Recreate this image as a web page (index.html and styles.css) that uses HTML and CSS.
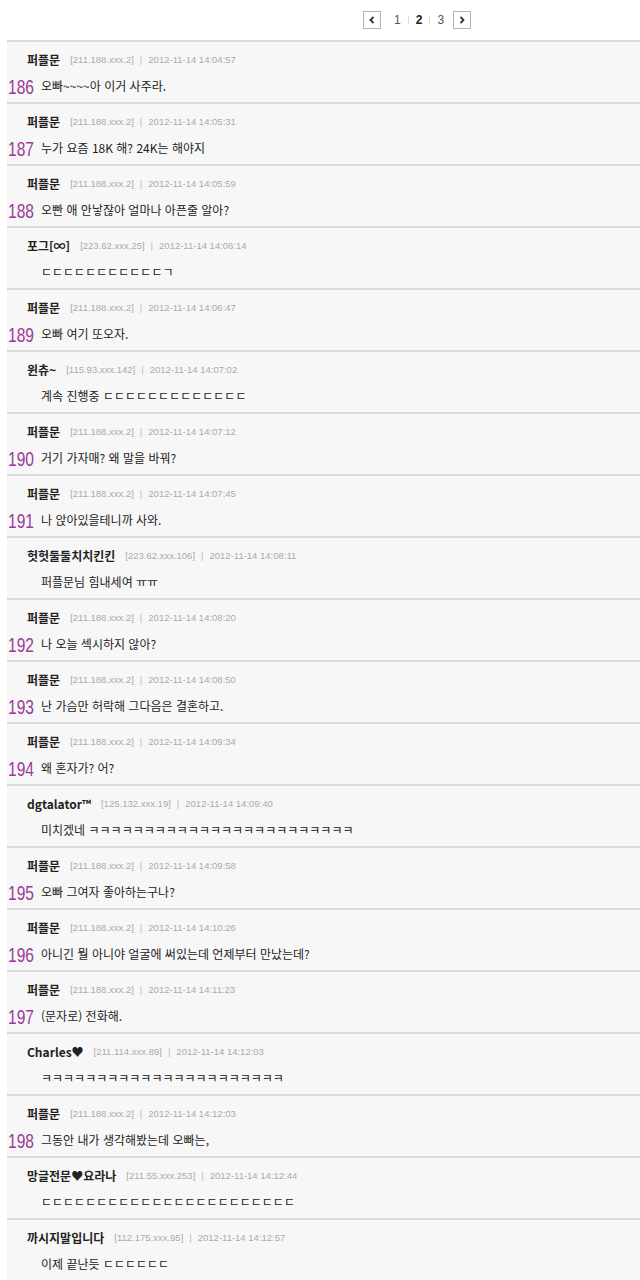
FILE: index.html
```html
<!DOCTYPE html>
<html lang="ko">
<head>
  <meta charset="UTF-8" />
  <meta name="viewport" content="width=device-width, initial-scale=1.0"/>
  <title>댓글</title>
  <link rel="stylesheet" href="styles.css">
</head>
<body>

  <div class="pager">
    <a class="pager-btn" href="#"><svg width="8" height="8" viewBox="0 0 8 8"><path d="M5.5 1 L2.5 4 L5.5 7" fill="none" stroke="#333" stroke-width="1.8"/></svg></a>
    <a class="pager-num first" href="#">1</a>
    <span class="pager-sep"></span>
    <a class="pager-num current" href="#">2</a>
    <span class="pager-sep"></span>
    <a class="pager-num last" href="#">3</a>
    <a class="pager-btn" href="#"><svg width="8" height="8" viewBox="0 0 8 8"><path d="M2.5 1 L5.5 4 L2.5 7" fill="none" stroke="#333" stroke-width="1.8"/></svg></a>
  </div>

  <ul id="comments"></ul>

  <script>
    const comments = [
      { name: "퍼플문", ip: "211.188.xxx.2", time: "14:04:57", no: 186, text: "오빠~~~~아 이거 사주라." },
      { name: "퍼플문", ip: "211.188.xxx.2", time: "14:05:31", no: 187, text: "누가 요즘 18K 해? 24K는 해야지" },
      { name: "퍼플문", ip: "211.188.xxx.2", time: "14:05:59", no: 188, text: "오빤 애 안낳잖아 얼마나 아픈줄 알아?" },
      { name: "포그[∞]", ip: "223.62.xxx.25", time: "14:06:14", text: "ㄷㄷㄷㄷㄷㄷㄷㄷㄷㄷㄷㄱ" },
      { name: "퍼플문", ip: "211.188.xxx.2", time: "14:06:47", no: 189, text: "오빠 여기 또오자." },
      { name: "윈츄~", ip: "115.93.xxx.142", time: "14:07:02", text: "계속 진행중 ㄷㄷㄷㄷㄷㄷㄷㄷㄷㄷㄷㄷㄷ" },
      { name: "퍼플문", ip: "211.188.xxx.2", time: "14:07:12", no: 190, text: "거기 가자매? 왜 말을 바꿔?" },
      { name: "퍼플문", ip: "211.188.xxx.2", time: "14:07:45", no: 191, text: "나 앉아있을테니까 사와." },
      { name: "헛헛둘둘치치킨킨", ip: "223.62.xxx.106", time: "14:08:11", text: "퍼플문님 힘내세여 ㅠㅠ" },
      { name: "퍼플문", ip: "211.188.xxx.2", time: "14:08:20", no: 192, text: "나 오늘 섹시하지 않아?" },
      { name: "퍼플문", ip: "211.188.xxx.2", time: "14:08:50", no: 193, text: "난 가슴만 허락해 그다음은 결혼하고." },
      { name: "퍼플문", ip: "211.188.xxx.2", time: "14:09:34", no: 194, text: "왜 혼자가? 어?" },
      { name: "dgtalator™", ip: "125.132.xxx.19", time: "14:09:40", text: "미치겠네 ㅋㅋㅋㅋㅋㅋㅋㅋㅋㅋㅋㅋㅋㅋㅋㅋㅋㅋㅋㅋㅋㅋㅋㅋ" },
      { name: "퍼플문", ip: "211.188.xxx.2", time: "14:09:58", no: 195, text: "오빠 그여자 좋아하는구나?" },
      { name: "퍼플문", ip: "211.188.xxx.2", time: "14:10:26", no: 196, text: "아니긴 뭘 아니야 얼굴에 써있는데 언제부터 만났는데?" },
      { name: "퍼플문", ip: "211.188.xxx.2", time: "14:11:23", no: 197, text: "(문자로) 전화해." },
      { name: "Charles♥", ip: "211.114.xxx.89", time: "14:12:03", text: "ㅋㅋㅋㅋㅋㅋㅋㅋㅋㅋㅋㅋㅋㅋㅋㅋㅋㅋㅋㅋㅋㅋ" },
      { name: "퍼플문", ip: "211.188.xxx.2", time: "14:12:03", no: 198, text: "그동안 내가 생각해봤는데 오빠는," },
      { name: "망글전문♥요라나", ip: "211.55.xxx.253", time: "14:12:44", text: "ㄷㄷㄷㄷㄷㄷㄷㄷㄷㄷㄷㄷㄷㄷㄷㄷㄷㄷㄷㄷㄷㄷㄷ" },
      { name: "까시지말입니다", ip: "112.175.xxx.95", time: "14:12:57", text: "이제 끝난듯 ㄷㄷㄷㄷㄷㄷ" }
    ];

    const list = document.getElementById("comments");
    comments.forEach(c => {
      const li = document.createElement("li");
      li.className = "comment";
      li.innerHTML = `
        <div class="meta">
          <span class="name">${c.name}</span>
          <span class="ip">[${c.ip}]</span>
          <span class="bar">|</span>
          <span class="date">2012-11-14 ${c.time}</span>
        </div>
        <div class="body">
          <span class="no"><span class="no-digits">${c.no || ""}</span></span>
          <span class="text">${c.text}</span>
        </div>
      `;
      list.appendChild(li);
    });
  </script>

</body>
</html>
```

FILE: styles.css
```css
body {
  margin: 0;
  background-color: #fff;
  font-family: "Noto Sans CJK KR", "Liberation Sans", sans-serif;
  color: #222;
}

.pager {
  height: 40px;
  display: flex;
  align-items: center;
  padding-left: 363px;
  box-sizing: border-box;
}

.pager-btn {
  width: 16px;
  height: 16px;
  border: 1px solid #b5b5b5;
  background-color: #fff;
  display: flex;
  align-items: center;
  justify-content: center;
}

.pager-num {
  font-family: "Liberation Sans", sans-serif;
  font-size: 12px;
  color: #555;
  text-decoration: none;
  padding: 0 7px;
}

.pager-num.first {
  margin-left: 6px;
}

.pager-num.last {
  padding-right: 9px;
}

.pager-num.current {
  font-weight: bold;
  color: #222;
}

.pager-sep {
  width: 1px;
  height: 8px;
  background-color: #ddd;
}

#comments {
  list-style: none;
  margin: 0 0 0 7px;
  padding: 0;
  background-color: #f7f7f7;
  border-top: 2px solid #dadada;
}

.comment {
  height: 51px;
  padding: 9px 0 0;
  border-bottom: 2px solid #dadada;
}

.meta {
  display: flex;
  align-items: center;
  height: 16px;
  padding-left: 20px;
  white-space: nowrap;
}

.name {
  font-size: 12px;
  font-weight: bold;
  color: #222;
  margin-right: 10px;
}

.ip, .bar, .date {
  font-family: "Liberation Sans", sans-serif;
  font-size: 9.5px;
  color: #aaa;
}

.bar {
  margin: 0 6px;
  color: #bbb;
}

.body {
  display: flex;
  align-items: center;
  height: 16px;
  margin-top: 10px;
  white-space: nowrap;
}

.no {
  width: 34px;
  flex-shrink: 0;
  padding-left: 1px;
  box-sizing: border-box;
  line-height: 16px;
}

.no-digits {
  display: inline-block;
  font-family: "Liberation Sans", sans-serif;
  font-size: 21px;
  color: #9b3a98;
  transform: scaleX(0.74);
  transform-origin: left center;
  position: relative;
  top: 2px;
}

.text {
  font-size: 12px;
  color: #222;
}
```
